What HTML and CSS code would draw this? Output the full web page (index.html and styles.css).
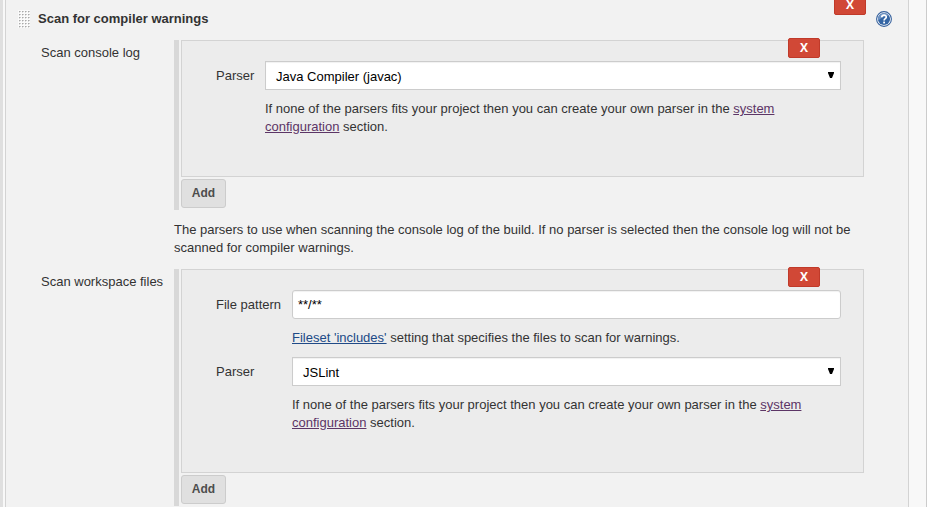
FILE: index.html
```html
<!DOCTYPE html>
<html lang="en">
<head>
<meta charset="utf-8">
<title>Configuration</title>
<link rel="stylesheet" href="styles.css">
</head>
<body>
<div class="page">
  <main class="panel">
    <header class="heading">
      <svg class="grip" width="12" height="18" viewBox="0 0 12 18">
        <defs><pattern id="dots" width="3" height="3" patternUnits="userSpaceOnUse"><rect width="3" height="3" fill="#fafafa"/><rect x="1" y="1" width="1" height="1" fill="#aaa"/><rect x="2" y="1" width="1" height="1" fill="#ccc"/><rect x="1" y="2" width="1" height="1" fill="#ddd"/></pattern></defs>
        <rect width="12" height="18" fill="url(#dots)"/>
      </svg>
      <h1>Scan for compiler warnings</h1>
      <button class="delete section-delete">X</button>
      <svg class="help" width="16" height="16" viewBox="0 0 16 16">
        <circle cx="8" cy="8" r="7.4" fill="#fff" stroke="#35609c" stroke-width="1.1"/>
        <circle cx="8" cy="8" r="6.1" fill="#3465a4"/>
        <path d="M2.2 9.5A6.1 6.1 0 0 1 13 4.5Q7 5 2.2 9.5Z" fill="#6f93c3"/>
        <path d="M5.8 6.2C5.8 3.4 10.3 3.4 10.3 6.1C10.3 7.7 8.1 7.7 8.1 9.5" fill="none" stroke="#fff" stroke-width="1.7"/>
        <rect x="7.2" y="10.6" width="1.8" height="1.8" fill="#fff"/>
      </svg>
    </header>

    <section class="setting">
      <div class="name">Scan console log</div>
      <div class="content">
        <div class="repeatable">
          <div class="box console">
            <button class="delete">X</button>
            <div class="label">Parser</div>
            <div class="field select">Java Compiler (javac)<svg class="arrow" width="6" height="6" viewBox="0 0 6 6"><path d="M0 0H6V1L4 6H2L0 1Z"/></svg></div>
            <p class="hint">If none of the parsers fits your project then you can create your own parser in the <a>system configuration</a> section.</p>
          </div>
          <button class="add">Add</button>
        </div>
        <p class="description">The parsers to use when scanning the console log of the build. If no parser is selected then the console log will not be scanned for compiler warnings.</p>
      </div>
    </section>

    <section class="setting">
      <div class="name">Scan workspace files</div>
      <div class="content">
        <div class="repeatable">
          <div class="box workspace">
            <button class="delete">X</button>
            <div class="label">File pattern</div>
            <div class="field text">**/**</div>
            <p class="hint single"><a class="fresh">Fileset 'includes'</a> setting that specifies the files to scan for warnings.</p>
            <div class="label">Parser</div>
            <div class="field select">JSLint<svg class="arrow" width="6" height="6" viewBox="0 0 6 6"><path d="M0 0H6V1L4 6H2L0 1Z"/></svg></div>
            <p class="hint">If none of the parsers fits your project then you can create your own parser in the <a>system configuration</a> section.</p>
          </div>
          <button class="add">Add</button>
        </div>
      </div>
    </section>
  </main>
</div>
</body>
</html>
```
FILE: styles.css
```css
* { box-sizing: border-box; }

body {
  margin: 0;
  height: 507px;
  overflow: hidden;
  background: #fff;
  color: #333;
  font: 13px/18px "Liberation Sans", Arial, sans-serif;
}

h1, p { margin: 0; }

.page {
  width: 927px;
  height: 507px;
  padding: 0 17px 0 2px;
  background: #f8f8f8;
  border-left: 3px solid #dfdfdf;
  border-right: 1px solid #ccc;
}

.panel {
  height: 507px;
  width: 904px;
  background: #f2f2f2;
  border: solid #d3d3d3;
  border-width: 0 1px;
}

.heading {
  display: flex;
  align-items: flex-start;
  height: 40px;
  padding-left: 12px;
}

.grip { margin-top: 10px; }

.heading h1 {
  width: 796px;
  margin-top: 10px;
  padding-left: 8px;
  font-size: 13px;
  line-height: 18px;
}

.help { margin: 11px 0 0 10px; }

button {
  padding: 0;
  font: bold 12px/18px "Open Sans", sans-serif;
}

.delete {
  width: 32px;
  height: 20px;
  color: #fff;
  background: #d14836;
  border: 1px solid #c03a2a;
  border-radius: 2px;
}

.section-delete { flex: none; margin: -5px 0 0 8px; }

.setting {
  display: grid;
  grid-template-columns: 133px 690px;
  padding-left: 35px;
}

.name { padding-top: 4px; }

.repeatable {
  border-left: 5px solid #d8d8d8;
  padding: 0 0 2px 2px;
}

.box {
  position: relative;
  display: grid;
  align-content: start;
  width: 683px;
  padding: 20px 22px 0 34px;
  background: #ececec;
  border: 1px solid #d3d3d3;
}

.console { height: 137px; grid-template-columns: 49px 1fr; }
.workspace { height: 204px; grid-template-columns: 76px 1fr; }

.box .delete { position: absolute; top: -3px; right: 43px; }

.label { padding-top: 6px; }

.field {
  height: 29px;
  background: #fff;
  border: 1px solid #ccc;
  box-shadow: inset 0 1px 1px rgba(0, 0, 0, .06);
  color: #000;
}

.select {
  display: flex;
  justify-content: space-between;
  padding: 6px 6px 0 10px;
}

.arrow { margin-top: 4px; }

.text { padding: 5px; border-radius: 3px; }

.hint { grid-column: 2; padding-top: 10px; }
.single { height: 38px; }

a { color: #5c3566; text-decoration: underline; }
.fresh { color: #204a87; }

.add {
  display: block;
  width: 45px;
  height: 29px;
  margin-top: 2px;
  padding-bottom: 2px;
  color: #4d4d4d;
  background: #e0e0e0;
  border: 1px solid #ccc;
  border-radius: 3px;
  font: bold 12px/18px "Liberation Sans", Arial, sans-serif;
}

.description { padding: 11px 0 12px; }
```
